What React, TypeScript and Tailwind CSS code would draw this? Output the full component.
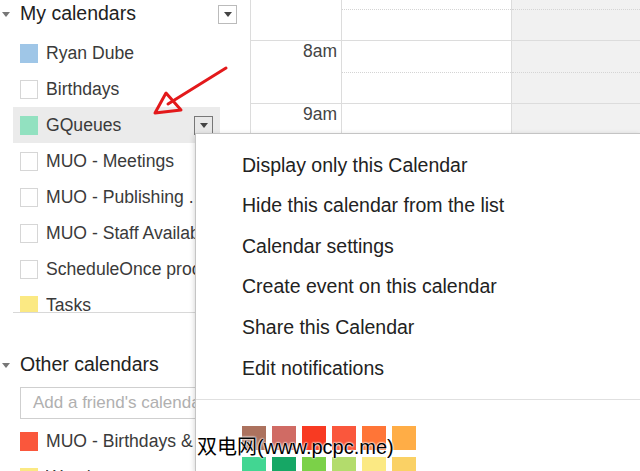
import React from 'react';

type Cal = { name: string; color?: string; active?: boolean };

const myCalendars: Cal[] = [
  { name: 'Ryan Dube', color: '#9fc6e7' },
  { name: 'Birthdays' },
  { name: 'GQueues', color: '#92e1c0', active: true },
  { name: 'MUO - Meetings' },
  { name: 'MUO - Publishing ...' },
  { name: 'MUO - Staff Availability' },
  { name: 'ScheduleOnce process' },
  { name: 'Tasks', color: '#fbe983' },
];

const otherCalendars: Cal[] = [
  { name: 'MUO - Birthdays & Events', color: '#fa573c' },
  { name: 'Weather', color: '#fbe983' },
];

const menuItems = [
  'Display only this Calendar',
  'Hide this calendar from the list',
  'Calendar settings',
  'Create event on this calendar',
  'Share this Calendar',
  'Edit notifications',
];

const swatches = [
  '#ac725e', '#d06b64', '#f83a22', '#fa573c', '#ff7537', '#ffad46',
  '#42d692', '#16a765', '#7bd148', '#b3dc6c', '#fbe983', '#fad165',
];

const Caret = ({ color = '#444' }: { color?: string }) => (
  <svg width="8" height="5" viewBox="0 0 8 5"><path d="M0 0h8L4 5z" fill={color} /></svg>
);

const DropButton = ({ dark }: { dark?: boolean }) => (
  <div
    className={
      dark
        ? 'w-[19px] h-[19px] flex items-center justify-center border border-[#777] bg-[#e8e8e8]'
        : 'w-[19px] h-[19px] flex items-center justify-center border border-[#bbb] bg-white'
    }
  >
    <Caret color="#444" />
  </div>
);

const CalRow = ({ cal }: { cal: Cal }) => (
  <div className={`h-[36px] shrink-0 flex items-center pl-[7px] pr-[7px] w-[207px] ${cal.active ? 'bg-[#ebebeb]' : ''}`}>
    {cal.color ? (
      <div className="w-[18px] h-[19px] shrink-0" style={{ backgroundColor: cal.color }} />
    ) : (
      <div className="w-[18px] h-[19px] shrink-0 border border-[#d6d6d6] bg-white" />
    )}
    <span className="ml-[8px] text-[17.6px] text-[#3a3a3a] whitespace-nowrap overflow-hidden flex-1">{cal.name}</span>
    {cal.active && <DropButton dark />}
  </div>
);

const Header = ({ title, button }: { title: string; button?: boolean }) => (
  <div className="h-[26px] shrink-0 flex items-center">
    <div className="w-[20px] pl-[2px] flex items-center"><Caret color="#777" /></div>
    <span className="text-[19.5px] text-[#222] flex-1">{title}</span>
    {button && <div className="mr-[13px]"><DropButton /></div>}
  </div>
);

const HourRow = ({ label }: { label?: string }) => (
  <div className="h-[63px] shrink-0 flex border-b border-[#dcdcdc]">
    <div className="w-[91px] border-r border-[#dcdcdc] text-right pr-[4px] text-[17.5px] leading-[20px] text-[#444]">{label}</div>
    <div className="w-[170px] border-r border-[#dcdcdc] pt-[31px]">
      <div className="border-t border-dotted border-[#d4d4d4]" />
    </div>
    <div className="flex-1 bg-[#f1f1f1] pt-[31px]">
      <div className="border-t border-dotted border-[#d4d4d4]" />
    </div>
  </div>
);

const App: React.FC = () => {
  return (
    <div className="relative w-[640px] h-[471px] overflow-hidden bg-white flex font-['Liberation_Sans',Arial,sans-serif]">
      {/* sidebar */}
      <aside className="w-[250px] shrink-0 flex flex-col pt-[1px]">
        <Header title="My calendars" button />
        <div className="mt-[8px] ml-[13px] h-[278px] shrink-0 overflow-hidden border-b border-[#d8d8d8] flex flex-col">
          {myCalendars.map(c => <CalRow key={c.name} cal={c} />)}
        </div>
        <div className="mt-[39px] shrink-0"><Header title="Other calendars" /></div>
        <div className="mt-[9px] ml-[20px] w-[222px] h-[32px] shrink-0 border border-[#cfcfcf] flex items-center pl-[12px] text-[17px] text-[#b0b0b0] whitespace-nowrap overflow-hidden">
          Add a friend's calendar
        </div>
        <div className="mt-[4px] ml-[13px] shrink-0 flex flex-col">
          {otherCalendars.map(c => <CalRow key={c.name} cal={c} />)}
        </div>
      </aside>

      {/* day grid */}
      <main className="flex-1 border-l border-[#dcdcdc]">
        <div className="-mt-[22px] flex flex-col">
          <HourRow />
          <HourRow label="8am" />
          <HourRow label="9am" />
          <HourRow label="10am" />
        </div>
      </main>

      {/* context menu */}
      <div className="absolute left-[195px] top-[133px] right-0 bottom-0 bg-white border-l border-t border-[#c4c4c4] shadow-[0_2px_6px_rgba(0,0,0,0.2)]">
        <div className="pt-[11px] pb-[10px]">
          {menuItems.map(m => (
            <div key={m} className="h-[40.6px] flex items-center pl-[46px] text-[19.5px] text-[#222] whitespace-nowrap">{m}</div>
          ))}
        </div>
        <div className="border-t border-[#e0e0e0] pt-[26px] pl-[46px]">
          <div className="grid grid-cols-[repeat(6,24px)] gap-x-[6px] gap-y-[7px]">
            {swatches.map(s => <div key={s} className="w-[24px] h-[24px]" style={{ backgroundColor: s }} />)}
          </div>
        </div>
      </div>

      {/* red annotation arrow */}
      <svg className="absolute left-0 top-0 pointer-events-none" width="640" height="471">
        <line x1="226" y1="68" x2="168" y2="104" stroke="#e3191b" strokeWidth="3" strokeLinecap="round" />
        <polygon points="166,93 155,113 181,110" fill="none" stroke="#e3191b" strokeWidth="3" strokeLinejoin="round" />
      </svg>

      {/* watermark */}
      <div className="absolute left-[197px] top-[435px] text-[20px] leading-[24px] text-black whitespace-nowrap font-['Liberation_Sans','Noto_Sans_CJK_SC',sans-serif] [text-shadow:0_0_2px_#fff,0_0_2px_#fff,0_0_2px_#fff]">
        双电网(www.pcpc.me)
      </div>
    </div>
  );
};

export default App;
